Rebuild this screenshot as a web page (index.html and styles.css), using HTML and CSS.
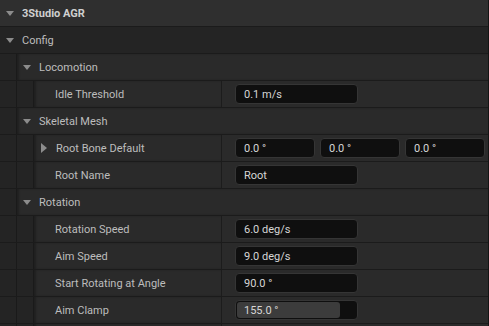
FILE: index.html
```html
<!DOCTYPE html>
<html>
  <head>
    <title>Details - 3Studio AGR</title>
    <link rel="stylesheet" href="styles.css">
  </head>
  <body>
    <div class="panel">
      <div class="row section top">
        <span class="arrow down"></span>
        <span class="title bold">3Studio AGR</span>
      </div>
      <div class="row section config">
        <span class="arrow down"></span>
        <span class="title">Config</span>
      </div>

      <div class="row">
        <span class="gutter"></span>
        <div class="cat">
          <span class="arrow down"></span>
          <span class="title">Locomotion</span>
        </div>
      </div>
      <div class="row">
        <span class="gutter"></span><span class="gutter"></span>
        <div class="name"><span class="label">Idle Threshold</span></div>
        <div class="value"><div class="box">0.1 m/s</div></div>
      </div>

      <div class="row">
        <span class="gutter"></span>
        <div class="cat">
          <span class="arrow down"></span>
          <span class="title">Skeletal Mesh</span>
        </div>
      </div>
      <div class="row">
        <span class="gutter"></span><span class="gutter"></span>
        <div class="name expand"><span class="arrow right"></span><span class="label">Root Bone Default</span></div>
        <div class="value triple">
          <div class="box">0.0 °</div>
          <div class="box">0.0 °</div>
          <div class="box">0.0 °</div>
        </div>
      </div>
      <div class="row">
        <span class="gutter"></span><span class="gutter"></span>
        <div class="name"><span class="label">Root Name</span></div>
        <div class="value"><div class="box">Root</div></div>
      </div>

      <div class="row">
        <span class="gutter"></span>
        <div class="cat">
          <span class="arrow down"></span>
          <span class="title">Rotation</span>
        </div>
      </div>
      <div class="row">
        <span class="gutter"></span><span class="gutter"></span>
        <div class="name"><span class="label">Rotation Speed</span></div>
        <div class="value"><div class="box">6.0 deg/s</div></div>
      </div>
      <div class="row">
        <span class="gutter"></span><span class="gutter"></span>
        <div class="name"><span class="label">Aim Speed</span></div>
        <div class="value"><div class="box">9.0 deg/s</div></div>
      </div>
      <div class="row">
        <span class="gutter"></span><span class="gutter"></span>
        <div class="name"><span class="label">Start Rotating at Angle</span></div>
        <div class="value"><div class="box">90.0 °</div></div>
      </div>
      <div class="row">
        <span class="gutter"></span><span class="gutter"></span>
        <div class="name"><span class="label">Aim Clamp</span></div>
        <div class="value"><div class="box slider"><span class="fill" style="width: 85%"></span><span class="num">155.0 °</span></div></div>
      </div>
      <div class="row tail">
        <span class="gutter"></span><span class="gutter"></span>
        <div class="name"></div>
        <div class="value"></div>
      </div>
    </div>
  </body>
</html>
```

FILE: styles.css
```css
html, body {
  margin: 0;
  padding: 0;
  background: #151515;
  overflow: hidden;
}
.panel {
  width: 488px;
  height: 326px;
  border-right: 1px solid #141414;
  font-family: Roboto, "Liberation Sans", sans-serif;
  font-size: 11px;
  color: #bdbdbd;
  overflow: hidden;
}
.row {
  display: flex;
  height: 26px;
  border-bottom: 1px solid #1b1b1b;
  background: #2a2a2a;
}
.section {
  align-items: center;
}
.top {
  background: #2f2f2f;
}
.config {
  background: #242424;
}
.gutter {
  width: 16px;
  flex: none;
  background: #242424;
  border-right: 1px solid #1a1a1a;
}
.cat {
  flex: 1;
  display: flex;
  align-items: center;
  background: #2a2a2a;
  box-shadow: inset 2px 0 2px rgba(0, 0, 0, 0.25);
}
.arrow {
  flex: none;
  width: 0;
  height: 0;
}
.arrow.down {
  margin: 1px 8px 0 6px;
  border-left: 4.5px solid transparent;
  border-right: 4.5px solid transparent;
  border-top: 5px solid #8c8c8c;
}
.arrow.right {
  margin: 0 9px 0 6px;
  border-top: 5px solid transparent;
  border-bottom: 5px solid transparent;
  border-left: 6px solid #8c8c8c;
}
.title {
  white-space: nowrap;
}
.bold {
  font-weight: bold;
  color: #cfcfcf;
}
.name {
  width: 188px;
  flex: none;
  display: flex;
  align-items: center;
  padding-left: 21px;
  box-sizing: border-box;
  border-right: 1px solid #1c1c1c;
  overflow: hidden;
  white-space: nowrap;
  box-shadow: inset 2px 0 2px rgba(0, 0, 0, 0.25);
}
.name.expand {
  padding-left: 1px;
}
.value {
  flex: 1;
  display: flex;
  align-items: center;
  padding-left: 13px;
}
.value.triple {
  gap: 5px;
  padding-right: 3px;
}
.box {
  width: 123px;
  height: 20px;
  box-sizing: border-box;
  background: #0f0f0f;
  border: 1px solid #353535;
  border-radius: 4px;
  padding-left: 8px;
  display: flex;
  align-items: center;
  color: #d6d6d6;
  font-size: 11px;
}
.triple .box {
  width: 80px;
}
.slider {
  position: relative;
  padding-left: 0;
  overflow: hidden;
}
.slider .fill {
  position: absolute;
  left: 1px;
  top: 1px;
  bottom: 1px;
  background: #3c3c3c;
  border-radius: 3px;
}
.slider .num {
  position: relative;
  padding-left: 8px;
}
```
